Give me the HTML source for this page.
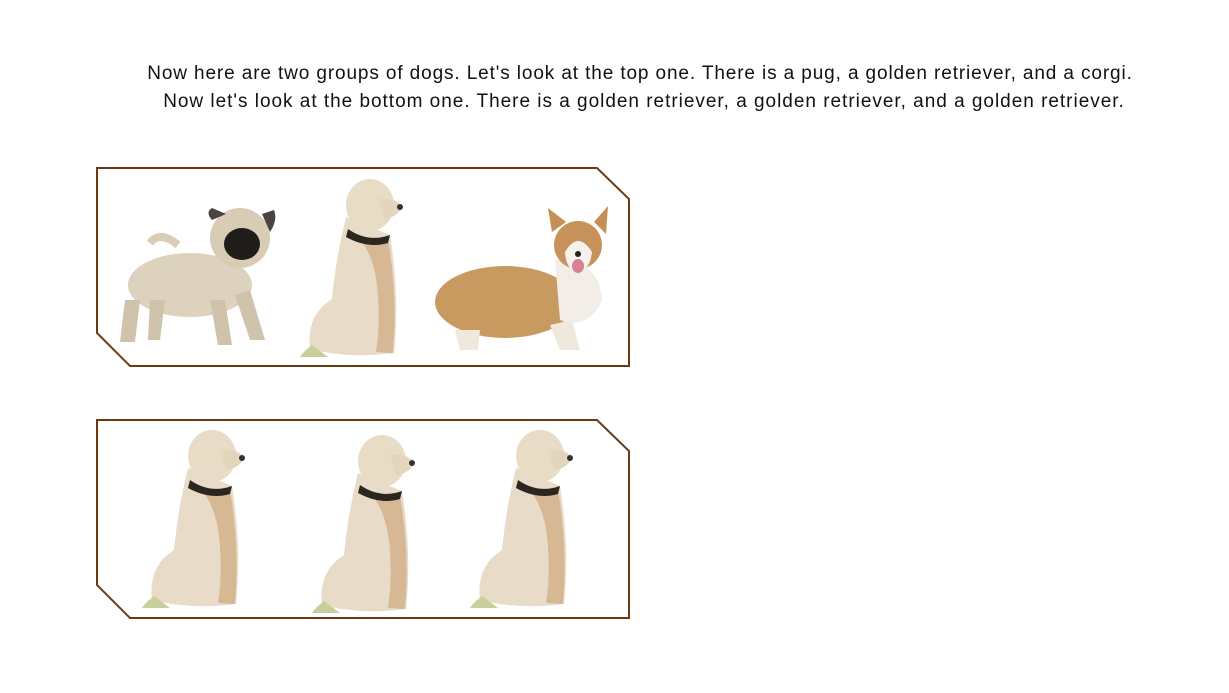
<!DOCTYPE html>
<html><head><meta charset="utf-8"><style>
body{margin:0;background:#fff;width:1229px;height:693px;overflow:hidden;position:relative;font-family:"Liberation Sans",sans-serif}
.t{position:absolute;left:0;width:1280px;text-align:center;font-size:19px;letter-spacing:0.88px;color:#111;line-height:28px;top:60px;white-space:nowrap}
svg{position:absolute;left:0;top:0}
</style></head><body>
<div class="t">Now here are two groups of dogs. Let's look at the top one. There is a pug, a golden retriever, and a corgi.<br><span style="padding-left:8px;letter-spacing:0.98px">Now let's look at the bottom one. There is a golden retriever, a golden retriever, and a golden retriever.</span></div>
<svg width="1229" height="693">
<defs>
<g id="ret">
<path d="M48 40 Q38 80 34 122 Q8 138 12 172 Q50 182 96 176 Q102 120 92 58 Z" fill="#e8dcc8"/>
<path d="M60 60 Q78 80 80 120 Q82 150 78 175 L95 176 Q100 120 90 62 Z" fill="#d6b994"/>
<ellipse cx="72" cy="28" rx="24" ry="26" fill="#e9dcc6"/>
<path d="M80 22 Q98 20 104 30 Q100 40 86 42 Z" fill="#e4d6bd"/>
<circle cx="102" cy="30" r="3" fill="#333"/>
<path d="M50 52 Q70 66 92 58 L90 66 Q70 72 48 60 Z" fill="#2b2620"/>
<path d="M14 168 Q4 176 2 180 L30 180 Z" fill="#c9cf9a"/>
</g>
</defs>
<g fill="none" stroke="#6b3a14" stroke-width="2">
<path d="M97 168 H597 L629 199 V366 H130 L97 333 Z"/>
<path d="M97 420 H597 L629 451 V618 H130 L97 585 Z"/>
</g>
<path d="M150 243 Q160 230 178 245" stroke="#d9cdb6" stroke-width="8" fill="none"/>
<ellipse cx="190" cy="285" rx="62" ry="32" fill="#ddd2bd"/>
<path d="M125 300 L120 342 L135 342 L140 300Z M150 300 L148 340 L160 340 L165 300Z M210 300 L218 345 L232 345 L225 300Z M235 295 L250 340 L265 340 L250 290Z" fill="#cfc3ab"/>
<circle cx="240" cy="238" r="30" fill="#d9ccb4"/>
<ellipse cx="242" cy="244" rx="18" ry="16" fill="#1f1c1a"/>
<path d="M212 220 Q205 212 212 208 L226 214Z M262 214 L274 210 Q278 220 270 232Z" fill="#4a4440"/>
<ellipse cx="505" cy="302" rx="70" ry="36" fill="#c89a60"/>
<path d="M455 330 L460 350 L478 350 L480 330Z M550 325 L560 350 L580 350 L572 320Z" fill="#efe8dd"/>
<path d="M555 260 Q600 260 602 300 Q590 330 560 320Z" fill="#f2ede6"/>
<circle cx="578" cy="245" r="24" fill="#c7935a"/>
<path d="M565 252 Q578 230 592 252 Q590 270 578 272 Q566 270 565 252Z" fill="#f5f2ee"/>
<path d="M552 232 L548 208 L566 222Z M594 222 L608 206 L606 234Z" fill="#c58f55"/>
<ellipse cx="578" cy="266" rx="6" ry="7" fill="#d98094"/>
<circle cx="578" cy="254" r="3" fill="#222"/>
<use href="#ret" x="298" y="177"/>
<use href="#ret" x="140" y="428"/>
<use href="#ret" x="310" y="433"/>
<use href="#ret" x="468" y="428"/>
</svg>
</body></html>
